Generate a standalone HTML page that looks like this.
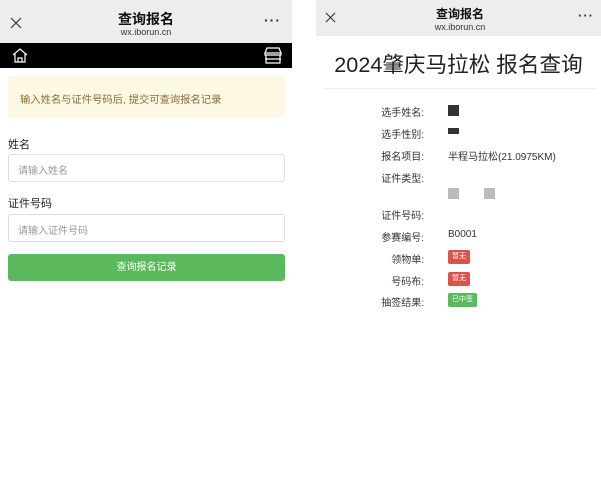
<!DOCTYPE html>
<html><head><meta charset="utf-8"><style>
*{margin:0;padding:0;box-sizing:border-box}
body{width:601px;height:477px;background:#fff;position:relative;overflow:hidden;font-family:"Liberation Sans","Noto Sans CJK SC",sans-serif;color:#333}
.a{position:absolute;white-space:nowrap}
.hdr{position:absolute;background:#ededed}
.t{font-size:14px;font-weight:bold;color:#111;text-align:center}
.u{font-size:9px;color:#333;text-align:center}
.lbl{position:absolute;right:177px;font-size:10px;color:#333;text-align:right}
.val{position:absolute;left:448px;font-size:10px;color:#333}
.badge{position:absolute;left:448px;font-size:7px;color:#fff;border-radius:2px;padding:0 4px;height:14px;line-height:14px}
</style></head><body>
<!-- left -->
<div class="hdr" style="left:0;top:0;width:292px;height:43px"></div>
<svg class="a" style="left:10px;top:17px" width="12" height="12" viewBox="0 0 12 12" stroke="#333" stroke-width="1.2"><path d="M1 1l10 10M11 1L1 11"/></svg>
<div class="a t" style="left:96px;top:9px;width:100px">查询报名</div>
<div class="a u" style="left:96px;top:27px;width:100px">wx.iborun.cn</div>
<div class="a" style="left:264px;top:12px;font-size:14px;font-weight:bold;letter-spacing:1px">···</div>
<div class="a" style="left:0;top:43px;width:292px;height:25px;background:#000"></div>
<svg class="a" style="left:12px;top:47px" width="16" height="16" viewBox="0 0 16 16" fill="none" stroke="#fff" stroke-width="1.2"><path d="M1 8L8 2l7 6M3 7v8h10V7M6 15v-4h4v4"/></svg>
<svg class="a" style="left:264px;top:47px" width="18" height="17" viewBox="0 0 18 17" fill="none" stroke="#fff" stroke-width="1.2"><path d="M3 1h12l2 5H1zM1 6v2h16V6M2 8v8h14V8M1 12h16"/></svg>
<div class="a" style="left:8px;top:76px;width:277px;height:42px;background:#fcf8e3;border-radius:3px"></div>
<div class="a" style="left:20px;top:91px;font-size:10.3px;color:#8a6d3b">输入姓名与证件号码后, 提交可查询报名记录</div>
<div class="a" style="left:8px;top:136px;font-size:11px;color:#222">姓名</div>
<div class="a" style="left:8px;top:154px;width:277px;height:28px;border:1px solid #ddd;border-radius:3px"></div>
<div class="a" style="left:18px;top:162px;font-size:10px;color:#999">请输入姓名</div>
<div class="a" style="left:8px;top:195px;font-size:11px;color:#222">证件号码</div>
<div class="a" style="left:8px;top:214px;width:277px;height:28px;border:1px solid #ddd;border-radius:3px"></div>
<div class="a" style="left:18px;top:222px;font-size:10px;color:#999">请输入证件号码</div>
<div class="a" style="left:8px;top:254px;width:277px;height:27px;background:#5cb85c;border-radius:3px;color:#fff;font-size:10px;text-align:center;line-height:27px">查询报名记录</div>
<!-- right -->
<div class="hdr" style="left:316px;top:0;width:285px;height:36px"></div>
<svg class="a" style="left:325px;top:12px" width="11" height="11" viewBox="0 0 12 12" stroke="#333" stroke-width="1.2"><path d="M1 1l10 10M11 1L1 11"/></svg>
<div class="a t" style="left:410px;top:5px;width:100px;font-size:12px">查询报名</div>
<div class="a u" style="left:410px;top:22px;width:100px">wx.iborun.cn</div>
<div class="a" style="left:578px;top:8px;font-size:13px;font-weight:bold;letter-spacing:1px">···</div>
<div class="a" style="left:316px;top:48px;width:285px;text-align:center;font-size:21.6px;color:#222">2024肇庆马拉松 报名查询</div>
<div class="a" style="left:325px;top:88px;width:270px;height:1px;background:#eee"></div>
<div class="lbl" style="top:104px">选手姓名:</div><div class="a" style="left:448px;top:105px;width:11px;height:11px;background:#333"></div>
<div class="lbl" style="top:126px">选手性别:</div><div class="a" style="left:448px;top:128px;width:11px;height:6px;background:#333"></div>
<div class="lbl" style="top:148px">报名项目:</div><div class="val" style="top:148px">半程马拉松(21.0975KM)</div>
<div class="lbl" style="top:170px">证件类型:</div>
<div class="a" style="left:448px;top:188px;width:11px;height:11px;background:#bbb"></div>
<div class="a" style="left:484px;top:188px;width:11px;height:11px;background:#bbb"></div>
<div class="lbl" style="top:207px">证件号码:</div>
<div class="lbl" style="top:229px">参赛编号:</div><div class="val" style="top:229px">B0001</div>
<div class="lbl" style="top:251px">领物单:</div><div class="badge" style="top:250px;background:#d9534f">暂无</div>
<div class="lbl" style="top:273px">号码布:</div><div class="badge" style="top:272px;background:#d9534f">暂无</div>
<div class="lbl" style="top:294px">抽签结果:</div><div class="badge" style="top:293px;background:#5cb85c">已中签</div>
</body></html>
